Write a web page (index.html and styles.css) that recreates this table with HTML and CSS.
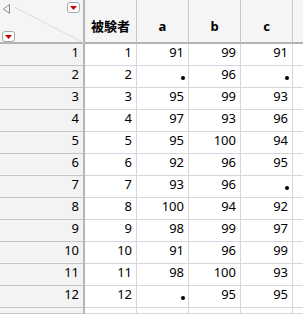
FILE: index.html
```html
<!DOCTYPE html>
<html>
<head>
<meta charset="utf-8">
<link rel="stylesheet" href="styles.css">
</head>
<body>
<div class="table">
  <div class="corner">
    <svg class="corner-art" width="85" height="44" viewBox="0 0 85 44">
      <line x1="15" y1="7.5" x2="84" y2="43" stroke="#dcdce6" stroke-width="1"/>
      <path d="M9.5 4.5 L3.5 9 L9.5 13.5 Z" fill="none" stroke="#8c8c8c" stroke-width="1"/>
    </svg>
    <span class="dd dd-top"><svg width="7" height="4" viewBox="0 0 7 4"><path d="M0 0 H7 L3.5 4 Z" fill="#cc0000"/></svg></span>
    <span class="dd dd-bottom"><svg width="7" height="4" viewBox="0 0 7 4"><path d="M0 0 H7 L3.5 4 Z" fill="#cc0000"/></svg></span>
  </div>
  <div class="colhead">被験者</div>
  <div class="colhead">a</div>
  <div class="colhead">b</div>
  <div class="colhead">c</div>
  <div class="colhead blank"></div>

  <div class="rowhead">1</div><div class="cell">1</div><div class="cell">91</div><div class="cell">99</div><div class="cell">91</div><div class="cell blank"></div>
  <div class="rowhead">2</div><div class="cell">2</div><div class="cell"><span class="miss"></span></div><div class="cell">96</div><div class="cell"><span class="miss"></span></div><div class="cell blank"></div>
  <div class="rowhead">3</div><div class="cell">3</div><div class="cell">95</div><div class="cell">99</div><div class="cell">93</div><div class="cell blank"></div>
  <div class="rowhead">4</div><div class="cell">4</div><div class="cell">97</div><div class="cell">93</div><div class="cell">96</div><div class="cell blank"></div>
  <div class="rowhead">5</div><div class="cell">5</div><div class="cell">95</div><div class="cell">100</div><div class="cell">94</div><div class="cell blank"></div>
  <div class="rowhead">6</div><div class="cell">6</div><div class="cell">92</div><div class="cell">96</div><div class="cell">95</div><div class="cell blank"></div>
  <div class="rowhead">7</div><div class="cell">7</div><div class="cell">93</div><div class="cell">96</div><div class="cell"><span class="miss"></span></div><div class="cell blank"></div>
  <div class="rowhead">8</div><div class="cell">8</div><div class="cell">100</div><div class="cell">94</div><div class="cell">92</div><div class="cell blank"></div>
  <div class="rowhead">9</div><div class="cell">9</div><div class="cell">98</div><div class="cell">99</div><div class="cell">97</div><div class="cell blank"></div>
  <div class="rowhead">10</div><div class="cell">10</div><div class="cell">91</div><div class="cell">96</div><div class="cell">99</div><div class="cell blank"></div>
  <div class="rowhead">11</div><div class="cell">11</div><div class="cell">98</div><div class="cell">100</div><div class="cell">93</div><div class="cell blank"></div>
  <div class="rowhead">12</div><div class="cell">12</div><div class="cell"><span class="miss"></span></div><div class="cell">95</div><div class="cell">95</div><div class="cell blank"></div>
  <div class="rowhead"></div><div class="cell"></div><div class="cell"></div><div class="cell"></div><div class="cell"></div><div class="cell blank"></div>
</div>
</body>
</html>
```
FILE: styles.css
```css
html, body {
  margin: 0;
  padding: 0;
  background: #ffffff;
}
body {
  width: 303px;
  height: 314px;
  overflow: hidden;
  font-family: "Noto Sans", "Noto Sans CJK JP", sans-serif;
  font-size: 13px;
  color: #000;
}
.table {
  display: grid;
  height: 314px;
  grid-template-columns: 85px 52px 52px 52px 52px 1fr;
  grid-template-rows: 44px repeat(12, 22px) 1fr;
}
.table > div {
  box-sizing: border-box;
}
.corner {
  position: relative;
  background: #f5f5f5;
  border-right: 2px solid #b4b4b4;
  border-bottom: 2px solid #b4b4b4;
}
.corner-art {
  position: absolute;
  left: 0;
  top: 0;
}
.dd {
  position: absolute;
  box-sizing: border-box;
  width: 13px;
  height: 11px;
  border: 1px solid #a8a8a8;
  border-radius: 3px;
  background: #ffffff;
  display: flex;
  align-items: center;
  justify-content: center;
}
.dd svg { display: block; }
.dd-top { left: 67px; top: 2px; }
.dd-bottom { left: 2px; top: 31px; }
.colhead {
  background: #f5f5f5;
  border-right: 1px solid #c6c6c6;
  border-bottom: 2px solid #b4b4b4;
  font-weight: bold;
  display: flex;
  align-items: flex-end;
  justify-content: center;
  padding-bottom: 7px;
  line-height: 17px;
}
.colhead.blank { border-right: none; }
.rowhead {
  background: #f3f3f3;
  border-right: 2px solid #b4b4b4;
  border-bottom: 1px solid #c4c4c4;
  text-align: right;
  padding-right: 4px;
  line-height: 17px;
}
.cell {
  background: #ffffff;
  border-right: 1px solid #d6d6e0;
  border-bottom: 1px solid #d6d6e0;
  text-align: right;
  padding-right: 4px;
  line-height: 17px;
}
.cell.blank { border-right: none; }
.miss {
  display: inline-block;
  width: 4px;
  height: 4px;
  border-radius: 50%;
  background: #000;
  margin-right: -1px;
  vertical-align: -1px;
}
```
